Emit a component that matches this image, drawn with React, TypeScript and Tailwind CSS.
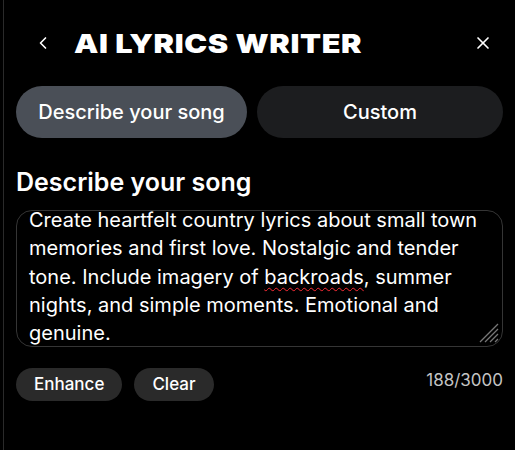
import { ChevronLeft, X } from 'lucide-react';

export default function App() {
  return (
    <div className="w-[515px] h-[450px] bg-black text-white overflow-hidden pl-[3px] font-['Inter',sans-serif]">
      <div className="h-full border-l border-[#2a2a2a]">
        <div className="flex items-center h-[86px] pl-[29px] pr-[22px]">
          <ChevronLeft className="w-5 h-5" strokeWidth={2} />
          <h1 className="ml-[21px] text-[26px] font-black tracking-[0.02em] scale-x-[1.18] origin-left whitespace-nowrap">
            AI LYRICS WRITER
          </h1>
          <X className="ml-auto w-5 h-5" strokeWidth={2} />
        </div>

        <div className="flex gap-[10px] px-[12px]">
          <button className="w-[231px] h-[52px] rounded-full bg-[#4a4f57] text-[20px] font-medium">
            Describe your song
          </button>
          <button className="flex-1 h-[52px] rounded-full bg-[#1c1d1f] text-[20px] font-medium">
            Custom
          </button>
        </div>

        <div className="px-[12px]">
          <h2 className="mt-[29px] text-[25px] font-semibold leading-[30px]">Describe your song</h2>
          <div className="relative mt-[13px] h-[137px] rounded-[16px] border border-[#353535] overflow-hidden">
            <p className="px-[12px] -mt-[5px] text-[20px] leading-[28.3px] text-white">
              Create heartfelt country lyrics about small town memories and first love. Nostalgic and tender tone. Include imagery of{' '}
              <span className="underline decoration-wavy decoration-red-500 decoration-1 underline-offset-[3px]">backroads</span>, summer
              nights, and simple moments. Emotional and genuine.
            </p>
            {/* resize grip */}
            <svg className="absolute right-[3px] bottom-[3px]" width="24" height="24" viewBox="0 0 24 24">
              <path d="M23 5 L5 23 M23 10 L10 23 M23 15 L15 23 M23 20 L20 23" stroke="#777" strokeWidth="1.3" />
            </svg>
          </div>

          <div className="flex items-center gap-[12px] mt-[21px]">
            <button className="h-[33px] px-[18px] rounded-full bg-[#2a2a2a] text-[17px] font-medium">Enhance</button>
            <button className="h-[33px] px-[18px] rounded-full bg-[#2a2a2a] text-[17px] font-medium">Clear</button>
            <span className="ml-auto -mt-[8px] text-[17px] text-[#c4c4c4]">188/3000</span>
          </div>
        </div>
      </div>
    </div>
  );
}
